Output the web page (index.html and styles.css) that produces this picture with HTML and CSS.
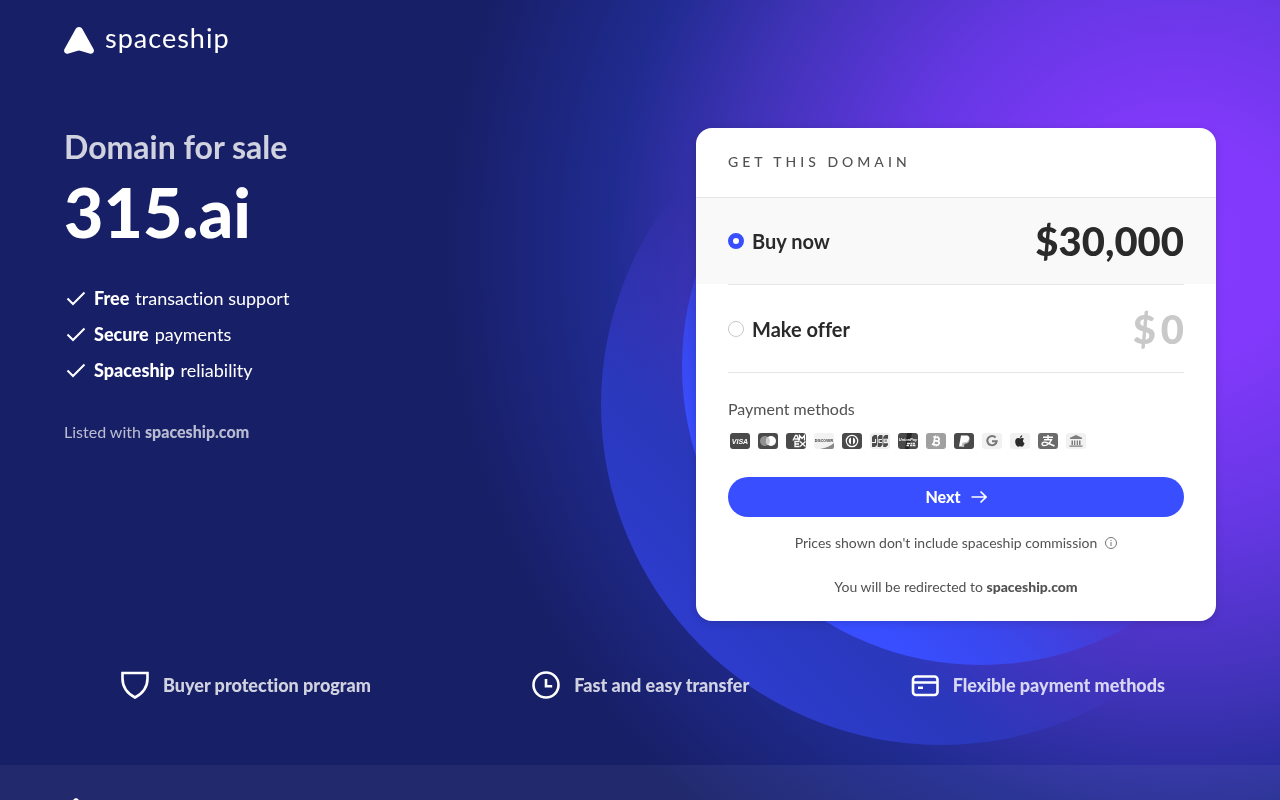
FILE: index.html
```html
<!DOCTYPE html>
<html lang="en">
<head>
<meta charset="utf-8">
<meta name="viewport" content="width=device-width, initial-scale=1">
<title>315.ai – Domain for sale</title>
<link rel="stylesheet" href="styles.css">
</head>
<body>
<svg class="backdrop" viewBox="0 0 1280 800" preserveAspectRatio="xMaxYMin slice" aria-hidden="true">
  <defs>
    <radialGradient id="glow" gradientUnits="userSpaceOnUse" cx="1180" cy="250" r="740">
      <stop offset="0" stop-color="#843afe"/>
      <stop offset=".15" stop-color="#8239fb"/>
      <stop offset=".38" stop-color="#6537e3"/>
      <stop offset=".6" stop-color="#4033b8"/>
      <stop offset=".77" stop-color="#202b90"/>
      <stop offset="1" stop-color="#171f66"/>
    </radialGradient>
    <linearGradient id="outer" gradientUnits="userSpaceOnUse" x1="700" y1="645" x2="1060" y2="285">
      <stop offset="0" stop-color="#2d3ccc"/>
      <stop offset=".25" stop-color="#2a38bc"/>
      <stop offset=".58" stop-color="#4a38d0" stop-opacity="0"/>
    </linearGradient>
    <linearGradient id="inner" gradientUnits="userSpaceOnUse" x1="770" y1="578" x2="1130" y2="217">
      <stop offset=".08" stop-color="#394eff"/>
      <stop offset=".22" stop-color="#394eff" stop-opacity=".75"/>
      <stop offset=".5" stop-color="#394eff" stop-opacity="0"/>
    </linearGradient>
  </defs>
  <rect width="1280" height="800" fill="#171f66"/>
  <rect width="1280" height="800" fill="url(#glow)"/>
  <circle cx="941" cy="405" r="340" fill="url(#outer)"/>
  <circle cx="981" cy="366" r="299" fill="url(#inner)"/>
</svg>
<header class="header">
  <a class="logo" href="#" aria-label="spaceship">
    <svg class="logo-mark" viewBox="0 0 30 27" aria-hidden="true"><path fill="#fff" d="M11.500 2.200C13 -.6 17 -.6 18.500 2.200L29.500 22C31 25 28.500 27.500 25.500 26.500L17 23.900Q15 23.300 13 23.900L4.500 26.500C1.500 27.500-1 25 .5 22Z"/></svg>
    <span class="logo-word">spaceship</span>
  </a>
</header>
<main class="main">
  <div class="hero">
    <section class="intro">
      <p class="kicker">Domain for sale</p>
      <h1 class="domain">315.ai</h1>
      <ul class="benefits">
        <li><svg class="check" viewBox="0 0 24 24" aria-hidden="true"><path d="M3.500 12.500 9 18 20.500 6.500"/></svg><b>Free</b><span>transaction support</span></li>
        <li><svg class="check" viewBox="0 0 24 24" aria-hidden="true"><path d="M3.500 12.500 9 18 20.500 6.500"/></svg><b>Secure</b><span>payments</span></li>
        <li><svg class="check" viewBox="0 0 24 24" aria-hidden="true"><path d="M3.500 12.500 9 18 20.500 6.500"/></svg><b>Spaceship</b><span>reliability</span></li>
      </ul>
      <p class="listed">Listed with <a href="#">spaceship.com</a></p>
    </section>
    <form class="card">
      <h2 class="card-title">GET THIS DOMAIN</h2>
      <div class="option option-active">
        <div class="option-row">
          <label class="option-label"><input class="radio" type="radio" name="mode" checked>Buy now</label>
          <span class="price">$30,000</span>
        </div>
      </div>
      <div class="option">
        <div class="option-row">
          <label class="option-label"><input class="radio" type="radio" name="mode">Make offer</label>
          <label class="offer">$<input class="offer-input" type="text" placeholder="0" aria-label="Your offer"></label>
        </div>
      </div>
      <div class="checkout">
        <p class="methods-title">Payment methods</p>
        <div class="methods">
          <svg viewBox="0 0 20 16"><rect width="20" height="16" rx="3" fill="#4a4a4a"/><text x="10" y="10.700" font-size="7" font-weight="900" font-style="italic" text-anchor="middle" fill="#fff">VISA</text></svg>
          <svg viewBox="0 0 20 16"><rect width="20" height="16" rx="3" fill="#4a4a4a"/><circle cx="7" cy="8" r="5" fill="#929292"/><circle cx="13" cy="8" r="5" fill="#fff"/><path d="M10 4a5 5 0 0 1 0 8a5 5 0 0 1 0-8" fill="#ccc"/></svg>
          <svg viewBox="0 0 20 16"><rect width="20" height="16" rx="3" fill="#4a4a4a"/><g fill="none" stroke="#fff" stroke-width="1.300"><path d="M7 7.500 9.500 2.500H11l2 5M8.500 6h3.500M13.500 7.500v-5l2.500 3 2.500-3v5M13.500 8.500H9v5h4.500M9 11h4M14 8.500l5.500 5M19.500 8.500l-5.500 5"/></g></svg>
          <svg viewBox="0 0 20 16"><rect width="20" height="16" rx="3" fill="#f2f2f2"/><path d="M20 10v4a2 2 0 0 1-2 2H6Q15 14.500 20 10" fill="#888"/><text x="10" y="9.200" font-size="3.500" font-weight="900" text-anchor="middle" fill="#333">DISCOVER</text></svg>
          <svg viewBox="0 0 20 16"><rect width="20" height="16" rx="3" fill="#4a4a4a"/><circle cx="10" cy="8" r="5.700" fill="#4a4a4a" stroke="#fff" stroke-width="1.200"/><path d="M9 4.500a3.800 3.800 0 0 0 0 7zM11 4.500a3.800 3.800 0 0 1 0 7z" fill="#fff"/></svg>
          <svg viewBox="0 0 20 16"><rect width="20" height="16" rx="3" fill="#efefef"/><path d="M4 2h3v10l-2 2H2V4zM9.500 2h3v10l-2 2H7.700V4zM15 2h3v10l-2 2h-2.800V4z" fill="#4c4c4c"/><path d="M5.500 6v3.500H2M12 6.500H9v3h3M14 6.300h3.500v3.300H14zM14 8h3.500" fill="none" stroke="#eee" stroke-width="1.100"/></svg>
          <svg viewBox="0 0 20 16"><rect width="20" height="16" rx="3" fill="#4a4a4a"/><path d="M9 0h5l-3 16H7z" fill="#252525"/><text x="10" y="8" font-size="4" font-weight="900" font-style="italic" text-anchor="middle" fill="#fff">UnionPay</text><path d="M9 10.500h3m.5 0h2m.5 0h2M8.500 12.500H11m1 0h2m.5 0h3" stroke="#eee" stroke-width="1.300"/></svg>
          <svg viewBox="0 0 20 16"><rect width="20" height="16" rx="3" fill="#a0a0a0"/><g transform="rotate(10 10 8)" fill="none" stroke="#fff" stroke-width="1.700"><path d="M6.500 4.300h4.500a1.700 1.700 0 0 1 0 3.500H8.500h3a2 2 0 0 1 0 4.000H6.500M8.300 4v8"/><path d="M8.800 2.500v2M11 2.500v2M8.800 11.500v2M11 11.500v2" stroke-width="1"/></g></svg>
          <svg viewBox="0 0 20 16"><rect width="20" height="16" rx="3" fill="#4a4a4a"/><path d="M7 2.500h5c3 0 4 2 3 4.500-.7 2-2.500 3-5 3L9 13.500H5z" fill="#fff"/><path d="M15 5c1.500 3-1 6-4.500 6L10 14H7.500L8.500 9.500h2.500c2.500 0 4-2 4-4.500" fill="#bcbcbc"/></svg>
          <svg viewBox="0 0 20 16"><rect width="20" height="16" rx="3" fill="#f1f1f1"/><path d="M13.600 4.500A4.700 4.700 0 1 0 14.700 8.300H10" fill="none" stroke="#777" stroke-width="2"/></svg>
          <svg viewBox="0 0 20 16"><rect width="20" height="16" rx="3" fill="#f1f1f1"/><path d="M12.200 2.200c.1 1.400-1 2.500-2.200 2.500C9.900 3.400 11 2.300 12.200 2.200zM14.100 5.800c-1.800 1.100-1.500 3.600.5 4.400-.7 1.900-1.800 3.600-2.900 3.500-.8 0-1-.4-1.800-.4s-1.100.4-1.800.4C6.700 13.800 5.200 11 5.200 8.600c0-3.500 2.800-4.200 4.800-3.200 1.300-.6 3-.8 4.100.4z" fill="#2b2b2b"/></svg>
          <svg viewBox="0 0 20 16"><rect width="20" height="16" rx="3" fill="#6a6a6a"/><path d="M5 4.200h10M10 2v4.700M6 6.700h7.500Q12 10.500 8.500 12.200 4.500 13.500 4 11c0-2 2.500-2.300 4.500-1.500L16.500 13" fill="none" stroke="#fff" stroke-width="1.400"/></svg>
          <svg viewBox="0 0 20 16"><rect width="20" height="16" rx="3" fill="#f1f1f1"/><path d="M10 2l6 2.800V6H4V4.800zM5.500 7.500H7V12H5.500zM8 7.500h1.300V12H8zM10.700 7.500H12V12h-1.300zM13 7.500h1.500V12H13zM3.500 12.500h13v1.300h-13z" fill="#7d7d7d"/></svg>
        </div>
        <button class="next" type="button">Next<svg viewBox="0 0 16 14" aria-hidden="true"><path d="M.5 7H15M9.500 1.500 15 7 9.500 12.500"/></svg></button>
        <p class="note">Prices shown don't include spaceship commission<svg viewBox="0 0 12 12" aria-hidden="true"><circle cx="6" cy="6" r="5.500"/><path d="M6 5v4M6 3v1"/></svg></p>
        <p class="note">You will be redirected to <b>spaceship.com</b></p>
      </div>
    </form>
  </div>
  <ul class="features">
    <li><svg viewBox="0 0 32 32" aria-hidden="true"><path d="M3.500 4H28.500V9.500C28.500 18 23.500 24.500 16 28.500 8.500 24.500 3.500 18 3.500 9.500Z"/></svg>Buyer protection program</li>
    <li><svg viewBox="0 0 32 32" aria-hidden="true"><circle cx="16" cy="16" r="12.500"/><path d="M16 10v7.300h6.200"/></svg>Fast and easy transfer</li>
    <li><svg viewBox="0 0 32 32" aria-hidden="true"><rect x="4" y="7.500" width="24.500" height="18.500" rx="3"/><path d="M4 13.500h24.500M9 18.700h5"/></svg>Flexible payment methods</li>
  </ul>
</main>
<footer class="footer">
  <svg class="footer-mark" viewBox="0 0 30 27" aria-hidden="true"><path fill="#fff" d="M11.500 2.200C13 -.6 17 -.6 18.500 2.200L29.500 22C31 25 28.500 27.500 25.500 26.500L17 23.900Q15 23.300 13 23.900L4.500 26.500C1.500 27.500-1 25 .5 22Z"/></svg>
</footer>
</body>
</html>
```

FILE: styles.css
```css
* { box-sizing: border-box; }
body, h1, h2, p, ul { margin: 0; padding: 0; }
ul { list-style: none; }
body {
  min-height: 100vh;
  overflow-x: hidden;
  background: #171f66;
  color: #fff;
  font: 16px/24px Lato, "Open Sans", sans-serif;
  font-variant-ligatures: none;
}
.backdrop {
  position: fixed;
  top: 0;
  left: 0;
  z-index: -1;
  width: 100%;
  height: 100vh;
}
.header { display: flex; align-items: center; height: 80px; padding: 0 64px; }
.logo { display: flex; align-items: center; gap: 11px; color: #fff; text-decoration: none; }
.logo-mark { width: 30px; height: 27px; }
.logo-word { font-size: 27px; line-height: 32px; font-weight: 400; letter-spacing: 1px; padding-bottom: 4px; }

.main { padding: 48px 64px 64px; }
.hero { display: flex; justify-content: space-between; align-items: flex-start; gap: 56px; }
.intro { flex: 1; }
.kicker { font-size: 32px; line-height: 38px; font-weight: 700; color: rgba(255,255,255,.8); }
.domain { font-size: 68px; line-height: 92px; font-weight: 900; }
.benefits { display: grid; gap: 12px; margin-top: 28px; }
.benefits li { display: flex; align-items: center; font-size: 18px; }
.benefits b { margin: 0 6px; font-weight: 900; }
.check { width: 24px; height: 24px; fill: none; stroke: #fff; stroke-width: 2; }
.listed { margin-top: 38px; color: rgba(255,255,255,.7); }
.listed a { color: inherit; font-weight: 900; text-decoration: none; }

.card {
  flex: 0 1 520px;
  border-radius: 16px;
  overflow: hidden;
  background: #fff;
  color: #525252;
  box-shadow: 0 2px 8px rgba(0,0,0,.15);
}
.card-title { padding: 22px 32px 24px; border-bottom: 1px solid #e6e6e6; font-size: 14px; line-height: 23px; font-weight: 500; letter-spacing: 4px; }
.option { padding: 0 32px; }
.option-active { background: linear-gradient(#f9f9f9 86px, #fff 86px); }
.option-row { display: flex; justify-content: space-between; align-items: center; height: 88px; border-bottom: 1px solid #e6e6e6; color: #2a2a2a; }
.option-active .option-row { height: 87px; }
.option-label { display: flex; align-items: center; gap: 8px; font-size: 20px; font-weight: 700; }
.radio { appearance: none; width: 16px; height: 16px; margin: 0; border: 1px solid #c9c9c9; border-radius: 50%; background: #fff; }
.radio:checked { border: 5px solid #394eff; }
.price { font-size: 40px; line-height: 48px; font-weight: 900; }
.offer { display: flex; align-items: center; gap: 4px; font-size: 40px; line-height: 48px; font-weight: 900; color: #c9c9c9; }
.offer-input { width: 24px; padding: 0; border: 0; background: none; font: inherit; color: inherit; text-align: right; }
.offer-input::placeholder { color: #c9c9c9; opacity: 1; }
.checkout { padding: 24px 32px 22px; }
.methods { display: flex; flex-wrap: wrap; gap: 8px; padding: 12px 2px 0; }
.methods svg { width: 20px; height: 16px; font-family: "Liberation Sans", sans-serif; }
.next {
  display: flex;
  align-items: center;
  justify-content: center;
  gap: 10px;
  width: 100%;
  height: 40px;
  margin: 28px 0 14px;
  border: 0;
  border-radius: 20px;
  background: #394eff;
  color: #fff;
  font: 900 16px/24px Lato, sans-serif;
}
.next svg { width: 16px; height: 14px; fill: none; stroke: #fff; stroke-width: 1.6; }
.note { display: flex; justify-content: center; align-items: center; font-size: 14px; white-space: pre-wrap; }
.note + .note { margin-top: 20px; }
.note b { font-weight: 900; }
.note svg { width: 12px; height: 12px; margin-left: 8px; fill: none; stroke: #777; }

.features { display: flex; justify-content: space-between; gap: 24px; padding: 0 51px 0 55px; margin-top: 48px; }
.features li { display: flex; align-items: center; gap: 12px; font-size: 18px; line-height: 32px; font-weight: 900; color: rgba(255,255,255,.8); }
.features svg { width: 32px; height: 32px; fill: none; stroke: #fff; stroke-width: 2.6; }
.footer { padding: 33px 64px; background: rgba(255,255,255,.05); }
.footer-mark { display: block; width: 24px; height: 22px; }
```
